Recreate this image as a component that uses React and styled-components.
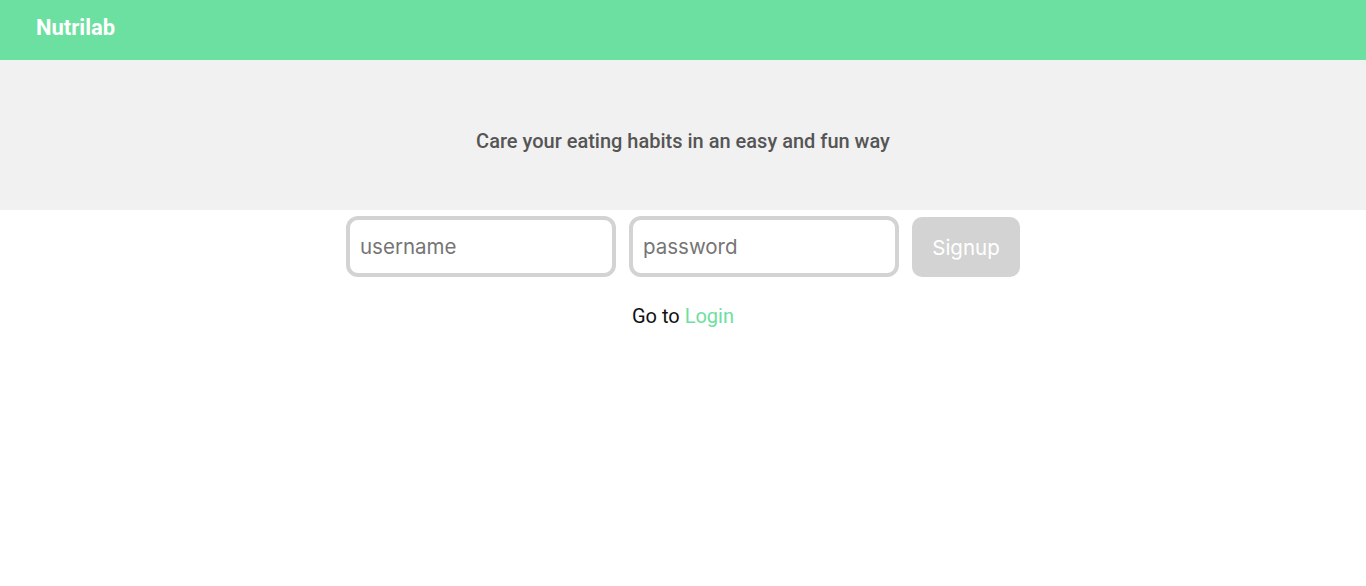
import React from "react";
import styled, { createGlobalStyle } from "styled-components";

const GlobalStyle = createGlobalStyle`
  body {
    margin: 0;
    font-family: Roboto, "Liberation Sans", sans-serif;
    background: #ffffff;
  }
`;

const Header = styled.header`
  height: 60px;
  background: #6ce0a0;
  display: flex;
  align-items: center;
  padding: 0 36px;
  box-sizing: border-box;
`;

const Brand = styled.div`
  color: #ffffff;
  font-size: 22px;
  font-weight: 700;
  padding-bottom: 5px;
`;

const Hero = styled.section`
  height: 150px;
  box-sizing: border-box;
  padding-top: 12px;
  background: #f1f1f1;
  display: flex;
  align-items: center;
  justify-content: center;
`;

const Tagline = styled.h2`
  margin: 0;
  color: #555555;
  font-size: 20px;
  font-weight: 500;
`;

const Form = styled.form`
  display: flex;
  justify-content: center;
  gap: 13px;
  padding-top: 6px;
`;

const Input = styled.input`
  width: 270px;
  height: 61px;
  box-sizing: border-box;
  border: 4px solid #d3d3d3;
  border-radius: 12px;
  padding: 0 10px;
  font-family: Inter, sans-serif;
  font-size: 20.5px;
  color: #333;
  outline: none;
  &::placeholder {
    color: #757575;
  }
`;

const Button = styled.button`
  width: 108px;
  height: 60px;
  margin-top: 1px;
  border: none;
  border-radius: 10px;
  background: #d3d3d3;
  color: #ffffff;
  font-family: Inter, sans-serif;
  font-size: 20.5px;
`;

const Footer = styled.p`
  margin: 27px 0 0;
  text-align: center;
  font-size: 20px;
  color: #111111;
`;

const Link = styled.a`
  color: #6ce0a0;
  text-decoration: none;
`;

export default function App() {
  return (
    <>
      <GlobalStyle />
      <Header>
        <Brand>Nutrilab</Brand>
      </Header>
      <Hero>
        <Tagline>Care your eating habits in an easy and fun way</Tagline>
      </Hero>
      <Form onSubmit={(e) => e.preventDefault()}>
        <Input placeholder="username" />
        <Input placeholder="password" type="password" />
        <Button type="submit">Signup</Button>
      </Form>
      <Footer>
        Go to <Link href="#">Login</Link>
      </Footer>
    </>
  );
}
